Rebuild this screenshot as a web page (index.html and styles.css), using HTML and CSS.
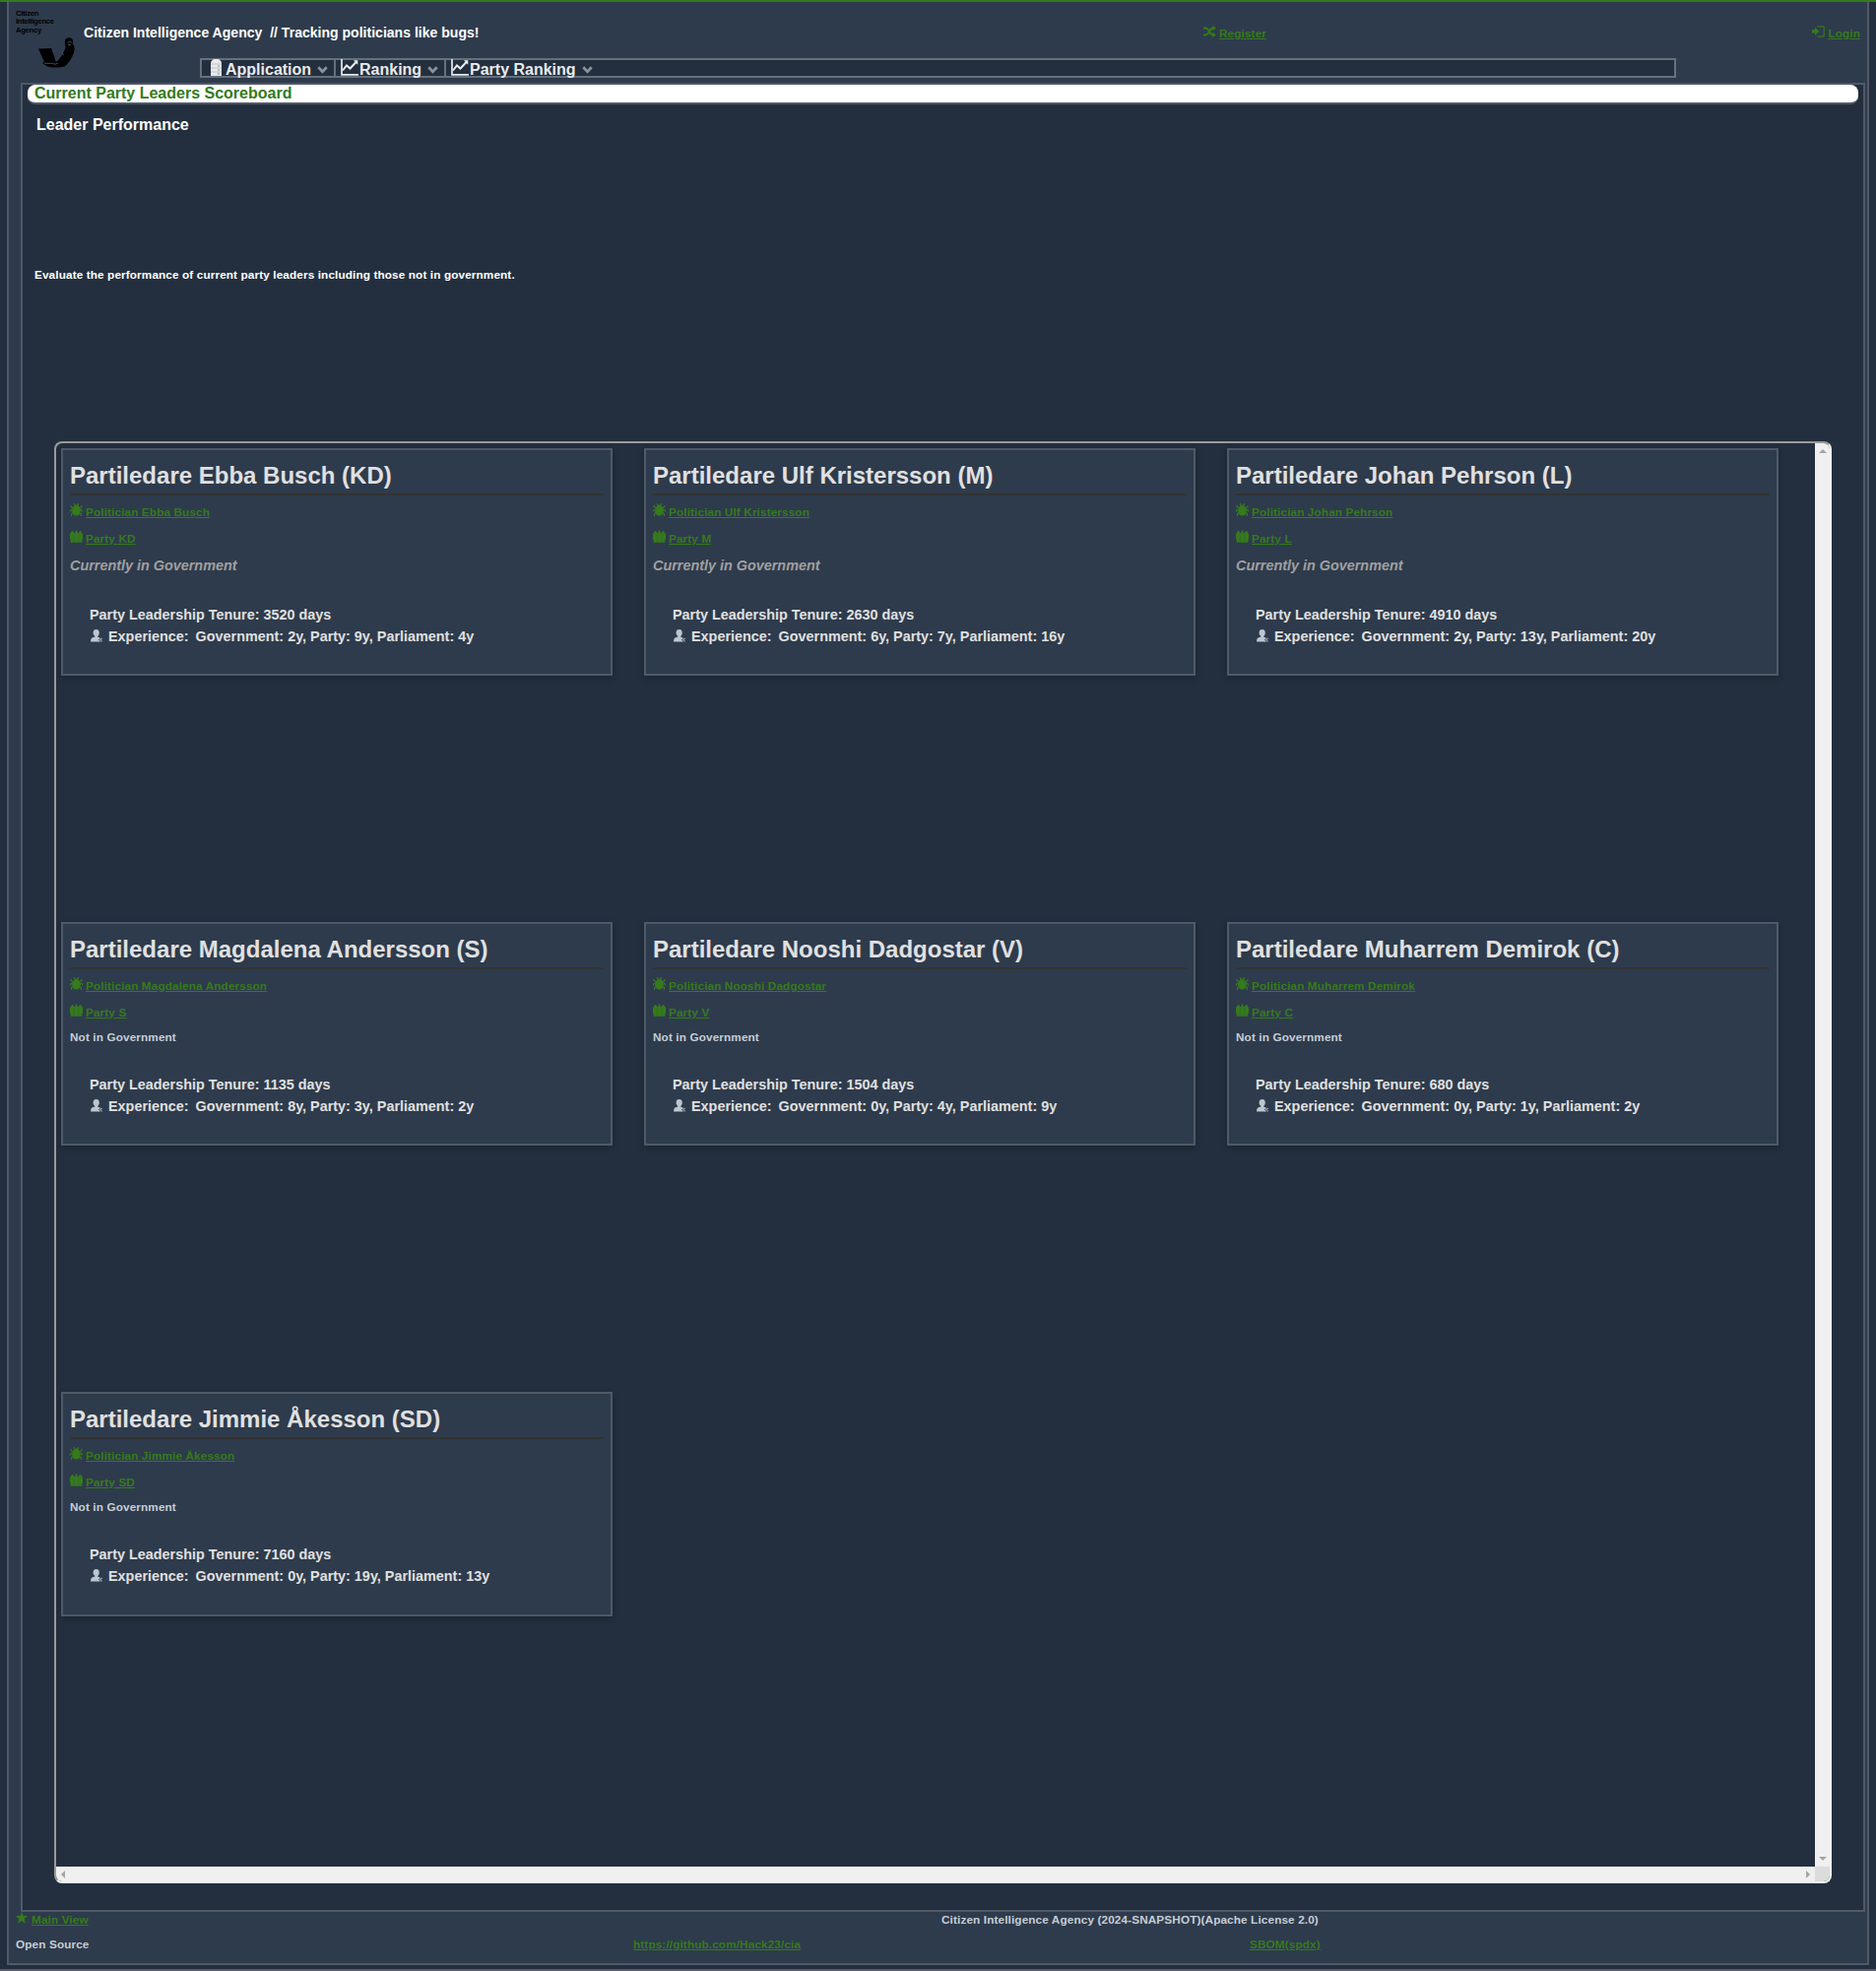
FILE: index.html
```html
<!DOCTYPE html>
<html lang="en">
<head>
<meta charset="utf-8">
<title>Citizen Intelligence Agency</title>
<link rel="stylesheet" href="styles.css">
</head>
<body>
<svg class="defs" width="0" height="0">
  <symbol id="bug" viewBox="0 0 13 13"><path d="M6.500 1.500c1.500 0 2 .8 2.200 1.500 1.600.8 2.100 2.500 2.100 4.500 0 3-1.800 5-4.300 5s-4.300-2-4.300-5c0-2 .5-3.700 2.100-4.500.2-.7.7-1.500 2.200-1.500z" fill="currentColor"/><path d="M5.300 2.500 4.300 0M7.700 2.500 8.700 0M3.500 4.800 1.400 3.800 .8 1.800M9.500 4.800l2.100-1 .6-2M3.200 7 1.200 6.500.2 8.500M9.800 7l2-.5 1.100 2M3.600 9.400 1.600 10.500v2.400M9.400 9.400l2 1.100v2.400" fill="none" stroke="currentColor" stroke-width="1.200"/></symbol>
  <symbol id="group" viewBox="0 0 13 13"><path d="M0 4.300Q.3 3 1.100 2.700 1.200 1 2.500 1T4 2.700Q4.300 3 4.500 3.500 5 2.600 5.600 2.500 5.300.2 6.500.2T7.400 2.500Q8 2.600 8.500 3.500 8.700 3 9 2.700 9.200 1 10.500 1T11.900 2.700Q12.800 3 13 4.300V9.500L12.300 10v2.800H.7V10L0 9.500z" fill="currentColor"/><path d="M4.200 4.500v7.800M8.800 4.500v7.800" stroke="#2f3b4c" stroke-width=".25"/></symbol>
  <symbol id="person" viewBox="0 0 12 13"><path d="M2.600 3.500C2.600 1.200 3.800.1 5.700.1s3.100 1.100 3.100 3.400c0 1.700-.8 2.700-1.500 3.400v.8l2.400.9-1.800 1.500 1 2.500H.1c0-2.900.6-3.900 2-4.400l2.200-.8v-.6C3.500 6.200 2.600 5.200 2.600 3.500z" fill="currentColor"/><path d="m8.300 9 3.200 3.500M11.500 9l-3.200 3.500" stroke="currentColor" stroke-width="1.200" stroke-dasharray="1.300 .4"/></symbol>
  <symbol id="chart" viewBox="0 0 18 17"><path d="M1 0v15.800h17" fill="none" stroke="currentColor" stroke-width="1.700"/><path d="m2 11.500 4-5 3.500 3L16.500 2" fill="none" stroke="currentColor" stroke-width="2"/><path d="M13 1.200h4.300v4.500z" fill="currentColor"/></symbol>
  <symbol id="chevron" viewBox="0 0 11 8"><path d="m1.300 1.300 4.200 4.400 4.200-4.400" fill="none" stroke="currentColor" stroke-width="2.700"/></symbol>
</svg>

<div class="shell">
  <header class="header">
    <div class="logo">
      <div class="logo-text">Citizen<br>Intelligence<br>Agency</div>
      <svg class="logo-mark" width="38" height="31" viewBox="0 0 38 31"><path d="M0 11.500 13 11l5 14c4-3 6-7 8-11 1-2 1.500-3 1.500-5C26 4 27 .5 31 .3c3.500-.2 5 3 3.600 6 2.400 2.500 2.400 6 1.400 9-1.500 5-5 11-9.500 14.200-5 1.500-14 1.500-18-.3L4 26l2-1z" fill="#000"/><path d="M29.500 5.500 32 4l2 1.200M6 26l4 .600 3-.4 4 1 3-1M24 15l1.500 3M30 7.500h3" fill="none" stroke="#5d6670" stroke-width=".7"/></svg>
    </div>
    <div class="brand">Citizen Intelligence Agency&nbsp; // Tracking politicians like bugs!</div>
    <a class="action register"><svg width="13" height="12" viewBox="0 0 13 12"><path d="M0 2.500h2.500C6 2.500 6 9.500 10 9.500M0 9.500h2.500C6 9.500 6 2.500 10 2.500" fill="none" stroke="currentColor" stroke-width="1.900"/><path d="M9 0l4 2.500L9 5.200zM9 6.800l4 2.700-4 2.500z" fill="currentColor"/></svg><span>Register</span></a>
    <a class="action login"><svg width="13" height="12" viewBox="0 0 13 12"><path d="M0 4h3V1.500L7.500 6 3 10V7.500H0z" fill="currentColor"/><path d="M5.500.800h5.700q1 0 1 1v8.400q0 1-1 1H5.500" fill="none" stroke="currentColor" stroke-width="1.200"/></svg><span>Login</span></a>
  </header>

  <nav class="menu">
    <div class="menu-item first"><svg width="11" height="17" viewBox="0 0 11 17"><path d="M0 4Q1 .3 4 0h3q3 .3 4 4v13H0z" fill="#e8eaed"/><path d="M0 5h11M0 9h11M0 13h11" stroke="#b3bac1" stroke-width=".8"/><path d="M7 7h2M7 11h2M7 15h2" stroke="#89939d"/></svg><span>Application</span><svg class="caret" width="11" height="8"><use href="#chevron"/></svg></div>
    <div class="menu-item"><svg width="18" height="17"><use href="#chart"/></svg><span>Ranking</span><svg class="caret" width="11" height="8"><use href="#chevron"/></svg></div>
    <div class="menu-item last"><svg width="18" height="17"><use href="#chart"/></svg><span>Party Ranking</span><svg class="caret" width="11" height="8"><use href="#chevron"/></svg></div>
  </nav>

  <main class="content">
    <h1 class="page-title">Current Party Leaders Scoreboard</h1>
    <h2 class="section-title">Leader Performance</h2>
    <p class="intro">Evaluate the performance of current party leaders including those not in government.</p>

    <div class="scroller">
      <div class="cards">
        <article class="card governing">
          <h3>Partiledare Ebba Busch (KD)</h3>
          <a class="link"><svg width="13" height="13"><use href="#bug"/></svg><span>Politician Ebba Busch</span></a>
          <a class="link"><svg width="13" height="13"><use href="#group"/></svg><span>Party KD</span></a>
          <p class="status">Currently in Government</p>
          <div class="facts"><p>Party Leadership Tenure: 3520 days</p><p class="exp"><svg width="12" height="13"><use href="#person"/></svg><span>Experience:</span><span>Government: 2y, Party: 9y, Parliament: 4y</span></p></div>
        </article>
        <article class="card governing">
          <h3>Partiledare Ulf Kristersson (M)</h3>
          <a class="link"><svg width="13" height="13"><use href="#bug"/></svg><span>Politician Ulf Kristersson</span></a>
          <a class="link"><svg width="13" height="13"><use href="#group"/></svg><span>Party M</span></a>
          <p class="status">Currently in Government</p>
          <div class="facts"><p>Party Leadership Tenure: 2630 days</p><p class="exp"><svg width="12" height="13"><use href="#person"/></svg><span>Experience:</span><span>Government: 6y, Party: 7y, Parliament: 16y</span></p></div>
        </article>
        <article class="card governing">
          <h3>Partiledare Johan Pehrson (L)</h3>
          <a class="link"><svg width="13" height="13"><use href="#bug"/></svg><span>Politician Johan Pehrson</span></a>
          <a class="link"><svg width="13" height="13"><use href="#group"/></svg><span>Party L</span></a>
          <p class="status">Currently in Government</p>
          <div class="facts"><p>Party Leadership Tenure: 4910 days</p><p class="exp"><svg width="12" height="13"><use href="#person"/></svg><span>Experience:</span><span>Government: 2y, Party: 13y, Parliament: 20y</span></p></div>
        </article>
        <article class="card">
          <h3>Partiledare Magdalena Andersson (S)</h3>
          <a class="link"><svg width="13" height="13"><use href="#bug"/></svg><span>Politician Magdalena Andersson</span></a>
          <a class="link"><svg width="13" height="13"><use href="#group"/></svg><span>Party S</span></a>
          <p class="status">Not in Government</p>
          <div class="facts"><p>Party Leadership Tenure: 1135 days</p><p class="exp"><svg width="12" height="13"><use href="#person"/></svg><span>Experience:</span><span>Government: 8y, Party: 3y, Parliament: 2y</span></p></div>
        </article>
        <article class="card">
          <h3>Partiledare Nooshi Dadgostar (V)</h3>
          <a class="link"><svg width="13" height="13"><use href="#bug"/></svg><span>Politician Nooshi Dadgostar</span></a>
          <a class="link"><svg width="13" height="13"><use href="#group"/></svg><span>Party V</span></a>
          <p class="status">Not in Government</p>
          <div class="facts"><p>Party Leadership Tenure: 1504 days</p><p class="exp"><svg width="12" height="13"><use href="#person"/></svg><span>Experience:</span><span>Government: 0y, Party: 4y, Parliament: 9y</span></p></div>
        </article>
        <article class="card">
          <h3>Partiledare Muharrem Demirok (C)</h3>
          <a class="link"><svg width="13" height="13"><use href="#bug"/></svg><span>Politician Muharrem Demirok</span></a>
          <a class="link"><svg width="13" height="13"><use href="#group"/></svg><span>Party C</span></a>
          <p class="status">Not in Government</p>
          <div class="facts"><p>Party Leadership Tenure: 680 days</p><p class="exp"><svg width="12" height="13"><use href="#person"/></svg><span>Experience:</span><span>Government: 0y, Party: 1y, Parliament: 2y</span></p></div>
        </article>
        <article class="card tall">
          <h3>Partiledare Jimmie Åkesson (SD)</h3>
          <a class="link"><svg width="13" height="13"><use href="#bug"/></svg><span>Politician Jimmie Åkesson</span></a>
          <a class="link"><svg width="13" height="13"><use href="#group"/></svg><span>Party SD</span></a>
          <p class="status">Not in Government</p>
          <div class="facts"><p>Party Leadership Tenure: 7160 days</p><p class="exp"><svg width="12" height="13"><use href="#person"/></svg><span>Experience:</span><span>Government: 0y, Party: 19y, Parliament: 13y</span></p></div>
        </article>
      </div>
      <div class="bar vertical"><i class="arrow up"></i><i class="arrow down"></i></div>
      <div class="bar horizontal"><i class="arrow left"></i><i class="arrow right"></i></div>
      <div class="corner"></div>
    </div>
  </main>

  <footer class="footer">
    <div class="footer-row top">
      <a class="link"><svg width="12" height="12" viewBox="0 0 12 12"><path d="m6 0 1.700 4H12L8.700 6.900 9.900 12 6 9.100 2.100 12l1.200-5.100L0 4h4.300z" fill="currentColor"/></svg><span>Main View</span></a>
      <span>Citizen Intelligence Agency (2024-SNAPSHOT)(Apache License 2.0)</span>
    </div>
    <div class="footer-row bottom">
      <span>Open Source</span>
      <a class="plain">https://github.com/Hack23/cia</a>
      <a class="plain">SBOM(spdx)</a>
    </div>
  </footer>
</div>
</body>
</html>
```
FILE: styles.css
```css
* { box-sizing: border-box; }
body {
  margin: 0;
  height: 2001px;
  background: #232f3e;
  border-top: 2px solid #357a1c;
  border-bottom: 2px solid #545b6a;
  color: #c6cdd6;
  font: bold 11.75px/16px "Liberation Sans", Arial, sans-serif;
  letter-spacing: .125px;
  white-space: nowrap;
}
h1, h2, h3, p { margin: 0; font-weight: bold; }
svg { display: block; flex: none; }
.defs { position: absolute; }

.shell {
  display: flex;
  flex-direction: column;
  height: 1993px;
  margin: 0 7px;
  background: #2e3b4c;
  border: 2px solid #505967;
  border-top: 0;
}

.header { display: flex; height: 57px; padding: 0 7px; }
.logo { width: 69px; padding-top: 8px; }
.logo-text { color: #000; font-size: 7.600px; line-height: 8.300px; letter-spacing: -.25px; }
.logo-mark { margin: 3px 0 0 23px; }
.brand { width: 1137px; padding-top: 21px; color: #fff; font-size: 14.050px; line-height: 20px; letter-spacing: 0; }
.action { display: flex; gap: 3px; padding-top: 24px; color: #357a1c; }
.action span { text-decoration: underline; height: 16px; }
.login { margin-left: auto; }

.menu {
  display: flex;
  width: 1499px;
  height: 20px;
  margin-left: 194px;
  background: #232f3e;
  border: 2px solid #65717b;
  color: #e8eaed;
  font-size: 16px;
  line-height: 20px;
  letter-spacing: 0;
}
.menu-item { display: flex; height: 16px; padding: 0 6px 0 5px; border-right: 2px solid #65717b; }
.menu-item.first { width: 136px; padding-left: 9px; }
.menu-item.first span { margin-left: 4px; }
.menu-item:nth-child(2) { width: 112px; }
.menu-item.last { border-right: 0; }
.menu-item svg { margin-top: -1px; }
.menu-item span { margin-left: 1px; }
.menu-item .caret { margin: 6px 0 0 6px; color: #8b949c; }

.content {
  height: 1857px;
  margin: 5px 2px 0 12px;
  padding: 0 5px;
  background: #232f3e;
  border: 2px solid #505967;
}
.page-title {
  height: 20px;
  padding-left: 7px;
  background: #fff;
  border-bottom: 2px solid #505967;
  border-radius: 8px;
  color: #357a1c;
  font-size: 16px;
  line-height: 17px;
  letter-spacing: 0;
}
.section-title { margin: 11px 0 0 9px; color: #fff; font-size: 16px; line-height: 20px; letter-spacing: 0; }
.intro { margin: 134px 0 0 7px; color: #fff; }

.scroller {
  display: grid;
  grid-template: 1445px 15px / 1786px 15px;
  width: 1805px;
  height: 1464px;
  margin: 161px 0 0 27px;
  border: 2px solid;
  border-color: #9a9a9a #f4f4f4 #f4f4f4 #9a9a9a;
  border-radius: 8px;
  overflow: hidden;
}
.cards {
  display: grid;
  grid-template-columns: repeat(3, 560px);
  grid-template-rows: 481px 477px 228px;
  column-gap: 32px;
  align-items: start;
  padding: 5px;
}
.card {
  height: 227px;
  padding: 10px 7px 0;
  background: #2e3b4c;
  border: 2px solid #505967;
  box-shadow: 0 2px 6px rgba(0, 0, 0, .25);
}
.card.governing { height: 231px; }
.card.tall { height: 228px; }
.card h3 {
  height: 36px;
  margin-bottom: 5px;
  border-bottom: 2px solid #333;
  color: #e0e0e0;
  font-size: 24px;
  line-height: 32px;
  letter-spacing: 0;
}
.link { display: flex; gap: 3px; height: 27px; padding-top: 3px; color: #357a1c; }
.link span { height: 16px; margin-top: 1px; text-decoration: underline; }
.status { margin-top: 2px; line-height: 16px; }
.governing .status { color: #a0a0a0; font-size: 14.400px; font-style: italic; line-height: 20px; letter-spacing: 0; }
.facts { padding: 29px 0 0 20px; color: #e0e0e0; font-size: 14.400px; line-height: 22px; letter-spacing: 0; }
.exp { display: flex; }
.exp svg { margin: 4px 0 0 1px; color: #bcc6d0; }
.exp span { margin-left: 6px; }
.exp span + span { margin-left: 7px; }

.bar { display: flex; justify-content: space-between; align-items: center; background: #f0f0f0; }
.vertical { flex-direction: column; padding: 6px 0; }
.horizontal { padding: 0 5px; }
.corner { background: #dcdcdc; }
.arrow { border: 4px solid transparent; }
.up { border-top: 0; border-bottom-color: #a3a3a3; }
.down { border-bottom: 0; border-top-color: #a3a3a3; }
.left { border-left: 0; border-right-color: #a3a3a3; }
.right { border-right: 0; border-left-color: #a3a3a3; }

.footer { padding: 0 7px; }
.footer-row { display: grid; height: 25px; }
.footer-row.top { grid-template-columns: 940px 1fr; }
.footer-row.bottom { grid-template-columns: 627px 626px 1fr; }
.footer .link { gap: 4px; padding-top: 0; }
.footer-row.top > span, .footer .link span { margin-top: 0; }
.footer .link svg { margin-top: 0; }
.plain { color: #357a1c; text-decoration: underline; }
```
